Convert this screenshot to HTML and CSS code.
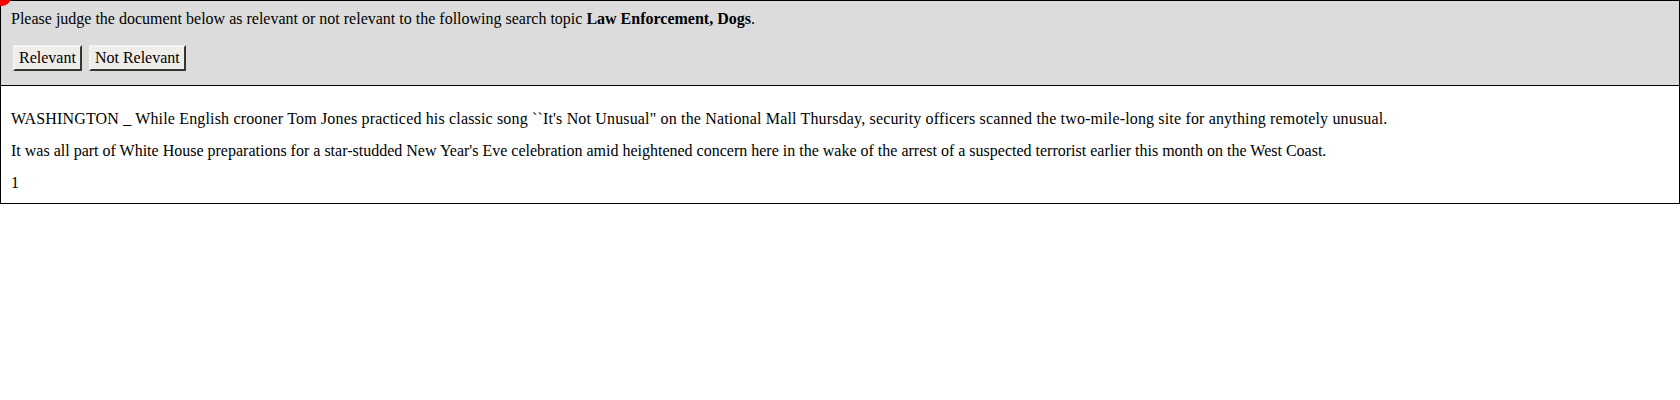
FILE: index.html
```html
<!DOCTYPE html>
<html>
<head>
<meta charset="utf-8">
<link rel="stylesheet" href="styles.css">
</head>
<body>
<div class="marker"></div>
<div class="judge">
  <p class="prompt">Please judge the document below as relevant or not relevant to the following search topic <b>Law Enforcement, Dogs</b>.</p>
  <div class="actions">
    <button class="btn">Relevant</button>
    <button class="btn">Not Relevant</button>
  </div>
</div>
<div class="doc">
  <p class="lead">WASHINGTON _ While English crooner Tom Jones practiced his classic song ``It's Not Unusual" on the National Mall Thursday, security officers scanned the two-mile-long site for anything remotely unusual.</p>
  <p>It was all part of White House preparations for a star-studded New Year's Eve celebration amid heightened concern here in the wake of the arrest of a suspected terrorist earlier this month on the West Coast.</p>
  <p class="last">1</p>
</div>
</body>
</html>
```
FILE: styles.css
```css
html, body {
  margin: 0;
  padding: 0;
  background: #fff;
}
body {
  font-family: "Liberation Serif", "Times New Roman", serif;
  font-size: 16px;
  line-height: 18px;
  color: #000;
  position: relative;
}
.marker {
  position: absolute;
  left: -7px;
  top: -12px;
  width: 18px;
  height: 18px;
  border-radius: 50%;
  background: #ff0000;
}
.judge {
  background: #dcdcdc;
  border: 1px solid #000;
  padding: 9px 10px 14px;
}
.prompt {
  margin: 0;
}
.actions {
  display: flex;
  gap: 7px;
  margin-top: 17px;
  padding-left: 2px;
}
.btn {
  font-family: "Liberation Serif", "Times New Roman", serif;
  font-size: 16px;
  line-height: 18px;
  color: #000;
  background: #efedea;
  border: 2px outset #c8c6c2;
  border-color: #f5f3f0 #8a8885 #8a8885 #f5f3f0;
  padding: 2px 4px;
  margin: 0;
}
.doc {
  border: 1px solid #000;
  border-top: none;
  padding: 10px 10px 0;
}
.doc p {
  margin: 14px 0;
}
.doc .last {
  margin-bottom: 11px;
}
.doc .lead {
  letter-spacing: 0.16px;
}
```
